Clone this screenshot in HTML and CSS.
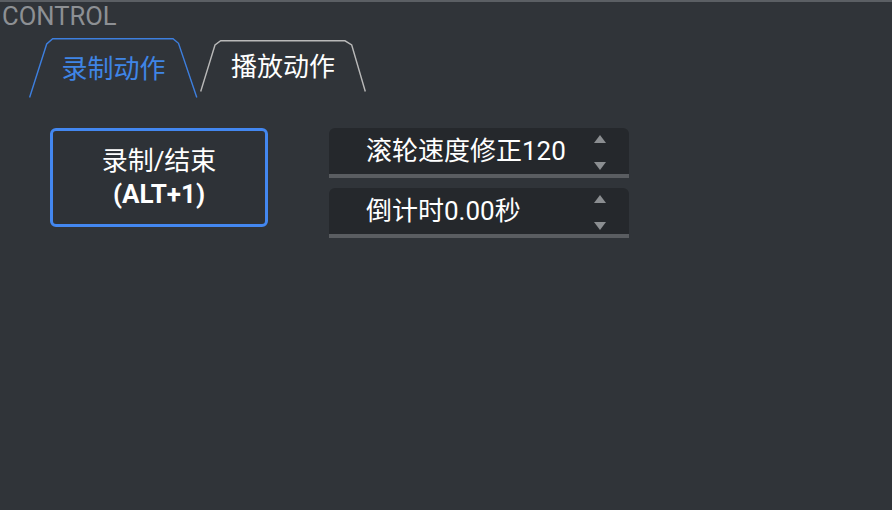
FILE: index.html
```html
<!DOCTYPE html>
<html lang="zh-CN">
<head>
<meta charset="utf-8">
<title>Control</title>
<link rel="stylesheet" href="styles.css">
</head>
<body>
<div class="panel">
  <div class="title">CONTROL</div>
  <div class="tabs">
    <div class="tab tab-active">
      <svg class="tab-shape" viewBox="0 0 169 60" width="169" height="60"><path d="M0.6 59.5 L17.7 6 L23.7 0.8 L144 0.8 L149.5 5.3 L167.8 59.5" fill="none" stroke="#3d7fdf" stroke-width="1.4"/></svg>
      <span class="tab-label">录制动作</span>
    </div>
    <div class="tab tab-idle">
      <svg class="tab-shape" viewBox="0 0 166 52" width="166" height="52"><path d="M0.7 51.5 L15 5 L20.7 0.8 L145 0.8 L151.7 5 L165.3 51.5" fill="none" stroke="#b9b9b9" stroke-width="1.4"/></svg>
      <span class="tab-label">播放动作</span>
    </div>
  </div>
  <div class="content">
    <button class="record-btn"><span class="btn-line1">录制/结束</span><span class="btn-line2">(ALT+1)</span></button>
    <div class="spins">
      <div class="spin">
        <span class="spin-text">滚轮速度修正120</span>
        <span class="spin-arrows"><span class="arrow-up"></span><span class="arrow-down"></span></span>
      </div>
      <div class="spin">
        <span class="spin-text">倒计时0.00秒</span>
        <span class="spin-arrows"><span class="arrow-up"></span><span class="arrow-down"></span></span>
      </div>
    </div>
  </div>
</div>
</body>
</html>
```
FILE: styles.css
```css
html, body {
  margin: 0;
  padding: 0;
  background: #303439;
  height: 100%;
}
body {
  font-family: "Roboto", "Noto Sans CJK SC", sans-serif;
  color: #ffffff;
}
.panel {
  border-top: 2px solid #5b5f64;
  height: 508px;
  box-sizing: border-box;
}
.title {
  font-size: 25.6px;
  line-height: 29px;
  color: #8d9094;
  padding-left: 2px;
  height: 29px;
}
.tabs {
  display: flex;
  align-items: flex-start;
  padding-left: 29px;
  margin-top: 7px;
  height: 62px;
}
.tab {
  position: relative;
  display: flex;
  align-items: center;
  justify-content: center;
  font-family: "Noto Sans CJK SC", sans-serif;
  font-size: 26px;
}
.tab-shape {
  position: absolute;
  left: 0;
  top: 0;
}
.tab-active {
  width: 169px;
  height: 60px;
  color: #3f85e6;
}
.tab-idle {
  width: 166px;
  height: 52px;
  margin-left: 2px;
  margin-top: 2px;
  color: #ffffff;
}
.tab-label {
  position: relative;
  line-height: 30px;
  margin-top: -2px;
}
.content {
  display: flex;
  align-items: flex-start;
  padding-left: 50px;
  margin-top: 28px;
}
.record-btn {
  width: 218px;
  height: 99px;
  box-sizing: border-box;
  border: 3px solid #4387f0;
  border-radius: 6px;
  background: #2e3237;
  color: #ffffff;
  display: flex;
  flex-direction: column;
  align-items: center;
  justify-content: center;
  padding: 0;
  font-family: "Roboto", "Noto Sans CJK SC", sans-serif;
  font-size: 26px;
}
.btn-line1 {
  line-height: 33px;
  font-weight: 400;
}
.btn-line2 {
  line-height: 33px;
  font-weight: 700;
}
.spins {
  display: flex;
  flex-direction: column;
  gap: 10px;
  margin-left: 61px;
  width: 300px;
}
.spin {
  height: 50px;
  box-sizing: border-box;
  background: #25282c;
  border-radius: 6px 6px 0 0;
  border-bottom: 4px solid #5a5d61;
  display: flex;
  align-items: center;
  justify-content: space-between;
  padding-left: 37px;
  padding-right: 23px;
}
.spin-text {
  font-size: 26px;
  line-height: 30px;
  color: #ffffff;
}
.spin-arrows {
  display: flex;
  flex-direction: column;
  justify-content: space-between;
  align-items: center;
  height: 37px;
  padding-top: 2px;
  box-sizing: border-box;
}
.arrow-up {
  width: 0;
  height: 0;
  border-left: 6px solid transparent;
  border-right: 6px solid transparent;
  border-bottom: 8px solid #8b8e91;
}
.arrow-down {
  width: 0;
  height: 0;
  border-left: 6px solid transparent;
  border-right: 6px solid transparent;
  border-top: 8px solid #8b8e91;
}
```
